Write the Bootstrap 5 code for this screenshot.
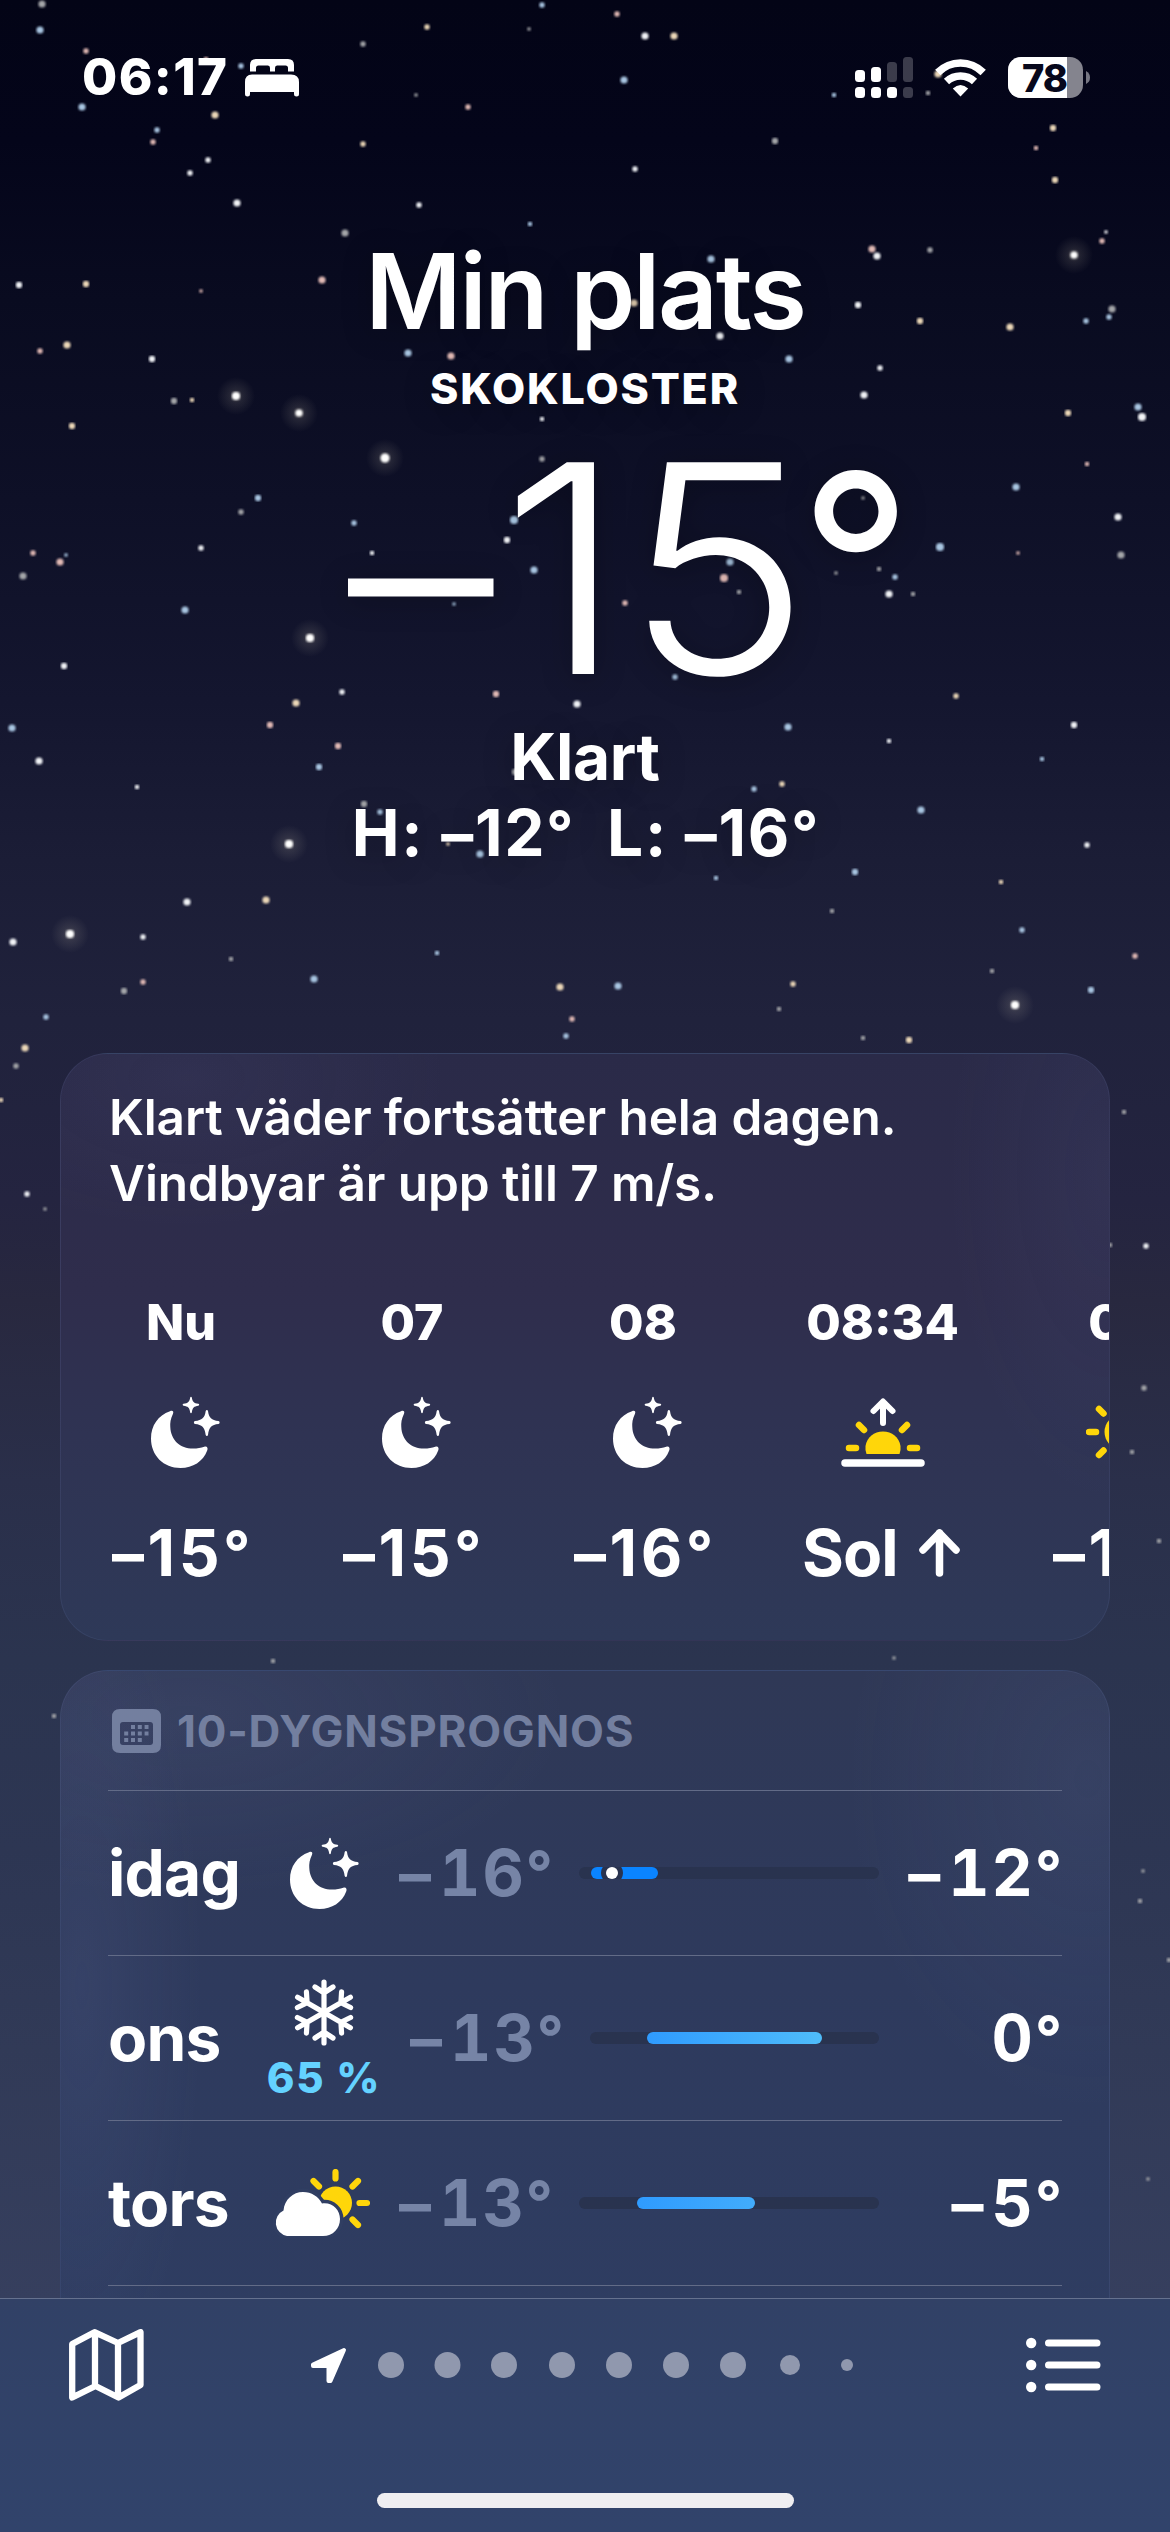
<!DOCTYPE html>
<html lang="sv" data-bs-theme="dark">
<head>
<meta charset="utf-8">
<meta name="viewport" content="width=device-width, initial-scale=1">
<title>Väder</title>
<link href="https://cdn.jsdelivr.net/npm/bootstrap@5.3.0/dist/css/bootstrap.min.css" rel="stylesheet">
<style>
  body { font-family: Inter, "Liberation Sans", sans-serif; color: #fff; background: #31426a; }
  .phone { width: 1170px; height: 2532px; background: linear-gradient(180deg, #030416 0, #04051a 140px, #090b20 300px, #0e1027 500px, #14162f 700px, #1b1d36 860px, #20223c 1020px, #242440 1200px, #28283f 1300px, #2a2f4a 1480px, #2b344f 1660px, #2d3653 1850px, #313a57 2050px, #363f5e 2298px); }
  .sky { left: 0; top: 0; }
  .screen { height: 2298px; }
  .statusbar { height: 155px; padding: 0 79px 0 82px; }
  .clock { font-size: 51px; font-weight: 760; letter-spacing: 1.4px; }
  .wifi { margin: 0 22px; }
  .hero { padding-top: 76px; text-shadow: 0 4px 30px rgba(0,0,0,.25); }
  .place { font-size: 104.5px; line-height: 120px; font-weight: 560; letter-spacing: -2.3px; }
  .town { font-size: 43px; line-height: 75px; font-weight: 850; letter-spacing: 1.8px; }
  .now-temp { font-size: 291px; line-height: 284px; font-weight: 335; padding-left: 348px; }
  .digits { transform: scaleX(1.08); margin-left: 18px; }
  .mn { position: relative; top: .015em; }
  .dg { font-size: .92em; line-height: 0; vertical-align: .05em; letter-spacing: 0; }
  .now-temp .mn { font-weight: 340; }
  .now-temp .dg { font-size: .86em; line-height: inherit; font-weight: 380; position: relative; top: -.02em; }
  .now-text { font-size: 64px; line-height: 93px; font-weight: 660; letter-spacing: -.4px; }
  .now-range { font-size: 64px; line-height: 59px; font-weight: 660; letter-spacing: 1.7px; white-space: pre; }
  .panels { margin: 191px 60px 0; gap: 29px; }
  .panel { border-radius: 48px; border: 1px solid rgba(140,160,220,.1); }
  .hourly { height: 588px; background: radial-gradient(260px 150px at 12% 4%, rgba(120,120,180,.08), transparent), radial-gradient(160px 330px at 100% 20%, rgba(110,125,190,.08), transparent), linear-gradient(180deg, #2a2a48 0, #2f2d4c 40%, #2f3353 65%, #2e3958 100%); padding: 30px 0 0 48px; }
  .summary { font-size: 49.5px; line-height: 66px; font-weight: 560; letter-spacing: -.1px; }
  .hours { margin: 76px 0 0 3px; gap: 93px; }
  .hour { width: 138px; }
  .hour-sun { width: 155px; }
  .hour-label { font-size: 50px; line-height: 60px; font-weight: 780; white-space: nowrap; }
  .hour-icon { height: 160px; }
  .hour .moon { margin-left: 7px; }
  .hour-temp { font-size: 64px; line-height: 81px; font-weight: 700; letter-spacing: 3.6px; white-space: nowrap; }
  .hour-sun .hour-temp { letter-spacing: -1px; margin-left: -3px; }
  .daily { height: 900px; padding: 0 47px; background: radial-gradient(380px 180px at 12% 5%, rgba(125,135,190,.1), transparent), radial-gradient(120px 420px at 2% 35%, rgba(125,135,190,.1), transparent), radial-gradient(240px 330px at 98% 12%, rgba(120,135,190,.1), transparent), linear-gradient(180deg, #2f3856 0, #2e3a5d 35%, #2f3f65 100%); }
  .daily-title { height: 119px; font-size: 44px; font-weight: 660; letter-spacing: .8px; color: #737f9f; }
  .calendar { margin: 0 16px 0 4px; }
  .day { height: 165px; border-top: 1px solid #626b87; font-size: 64px; font-weight: 700; }
  .day-name { width: 141px; letter-spacing: -.8px; }
  .day-icon { width: 150px; }
  .day-icon.wide { margin-right: 11px; padding-top: 11px; }
  .partly { margin-left: -6px; }
  .rain { font-size: 42px; line-height: 63px; font-weight: 820; letter-spacing: 1.7px; color: #64d2ff; white-space: nowrap; }
  .low, .high { font-variant-numeric: tabular-nums; letter-spacing: 2px; white-space: nowrap; }
  .low .mn, .high .mn { letter-spacing: 8px; }
  .low { width: 180px; color: #7684a6; }
  .high { width: 183px; }
  .track { height: 12px; border-radius: 6px; background: #29334f; }
  .span { height: 12px; border-radius: 6px; background: linear-gradient(90deg, #2f9bff, #4fbcfa); }
  .span.cold { background: #0a84ff; }
  .span.mid { background: linear-gradient(90deg, #2f9bff, #42acfb); }
  .dot-now { width: 12px; height: 12px; box-shadow: 0 0 0 5px #29334f; top: 0; clip-path: inset(0 -5px); }
  .toolbar { height: 234px; border-top: 1px solid #65718e; background: linear-gradient(180deg, #314166, #31436b); }
  .tools { height: 132px; padding: 0 69px; }
  .pager { width: 550px; }
  .home { width: 417px; height: 15px; background: #efeef1; margin-top: 62px; }
</style>
</head>
<body>
<svg class="d-none" xmlns="http://www.w3.org/2000/svg">
  <symbol id="moon" viewBox="0 0 70 73">
    <path fill="#fff" d="M20 15.2C22.5 14 24 15.5 23 17.8C20.5 23 20 27 20.3 31C20.8 44 30 52.6 43 52.6C47.5 52.6 51 52 54.3 50.8C57 50 58.3 52 57.2 54.5C53 65.500 43 72 30.500 72C13.500 72 1 59.500 1 42.500C1 29.500 8 19.500 20 15.200Z"/>
    <path fill="#fff" d="M55.700 39C54.700 31 52 28.800 45 28C43.500 27.700 43.500 25.300 45 25C52 24.200 54.700 22 55.700 15C56 13.600 57.800 13.600 58 15C59 22 61.500 24.200 68.500 25C70 25.300 70 27.700 68.500 28C61.500 28.800 59 31 58 39C57.800 40.300 56 40.300 55.700 39Z"/>
    <path fill="#fff" d="M40.200 16.500C39.500 11.500 38 10.500 33.500 9.800C32.400 9.500 32.400 8 33.500 7.800C38 7.200 39.500 6 40.200 1.500C40.500.5 41.500.5 41.800 1.500C42.500 6 44 7.200 48.300 7.800C49.500 8 49.500 9.500 48.300 9.800C44 10.500 42.500 11.500 41.800 16.500C41.500 17.400 40.500 17.400 40.200 16.500Z"/>
  </symbol>
</svg>
<div class="phone position-relative overflow-hidden">
  <svg class="sky position-absolute" id="sky" width="1170" height="2298"><defs><radialGradient id="halo"><stop offset="0" stop-color="#fff3d0" stop-opacity=".34"/><stop offset=".35" stop-color="#fff3d0" stop-opacity=".1"/><stop offset="1" stop-color="#fff3d0" stop-opacity="0"/></radialGradient><filter id="soft"><feGaussianBlur stdDeviation=".8"/></filter></defs></svg>
  <div class="screen position-relative overflow-hidden">
    <header class="statusbar d-flex align-items-center justify-content-between">
      <div class="d-flex align-items-center">
        <span class="clock">06:17</span>
        <svg class="ms-3" width="54" height="38" viewBox="0 0 54 38" fill="#fff"><path d="M5 12.500V6Q5 0 11 0H43Q49 0 49 6V12.500H43V9Q43 6.500 40.500 6.500H32Q30 6.500 30 9V12.500H25V9Q25 6.500 23 6.500H13.500Q11 6.500 11 9V12.500Z"/><path d="M0 35V23Q0 15.500 7 15.500H46Q54 15.500 54 23V35Q54 37.500 51.500 37.500T49 35V33H5V35Q5 37.500 2.500 37.500T0 35Z"/></svg>
      </div>
      <div class="d-flex align-items-center">
        <svg width="58" height="42" fill="#fff"><rect y="13" width="10" height="12" rx="3.500"/><rect x="16" y="10" width="10" height="15" rx="3.500"/><g opacity=".22"><rect x="32" y="5" width="10" height="20" rx="3.500"/><rect x="48" width="10" height="25" rx="3.500"/><rect x="48" y="30" width="10" height="11" rx="3.500"/></g><rect y="30" width="10" height="11" rx="3.500"/><rect x="16" y="30" width="10" height="11" rx="3.500"/><rect x="32" y="30" width="10" height="11" rx="3.500"/></svg>
        <svg class="wifi" width="51" height="38" viewBox="0 0 51 38"><path d="M2.800 13.500Q12.500 4 25.500 4T48.200 13.500M11.500 22.500Q17.500 17 25.500 17T39.500 22.500" fill="none" stroke="#fff" stroke-width="7.600"/><path d="M17.800 29.500Q25.500 22.500 33.200 29.500L25.500 37.500Z" fill="#fff"/></svg>
        <svg width="83" height="42"><clipPath id="bat"><rect width="75" height="41" rx="13"/></clipPath><g clip-path="url(#bat)"><rect width="75" height="41" fill="#84848e"/><rect width="59" height="41" fill="#fff"/></g><path d="M78 14q4 2 4 6.500t-4 6.500z" fill="#777783"/><text x="36.500" y="34.500" text-anchor="middle" font-size="38" font-weight="850" fill="#07081c" letter-spacing="-1">78</text></svg>
      </div>
    </header>
    <section class="hero text-center">
      <div class="place">Min plats</div>
      <div class="town">SKOKLOSTER</div>
      <div class="now-temp d-flex"><span class="mn">–</span><span class="digits">15</span><span class="dg">°</span></div>
      <div class="now-text">Klart</div>
      <div class="now-range">H: <span class="mn">–</span>12<span class="dg">°</span>  L: <span class="mn">–</span>16<span class="dg">°</span></div>
    </section>
    <main class="panels d-flex flex-column">
      <section class="panel hourly overflow-hidden">
        <div class="summary">Klart väder fortsätter hela dagen.<br>Vindbyar är upp till 7 m/s.</div>
        <div class="hours d-flex text-center">
          <div class="hour flex-shrink-0"><div class="hour-label">Nu</div><div class="hour-icon d-flex align-items-center justify-content-center"><svg class="moon" width="70" height="73"><use href="#moon"/></svg></div><div class="hour-temp"><span class="mn">–</span>15<span class="dg">°</span></div></div>
          <div class="hour flex-shrink-0"><div class="hour-label">07</div><div class="hour-icon d-flex align-items-center justify-content-center"><svg class="moon" width="70" height="73"><use href="#moon"/></svg></div><div class="hour-temp"><span class="mn">–</span>15<span class="dg">°</span></div></div>
          <div class="hour flex-shrink-0"><div class="hour-label">08</div><div class="hour-icon d-flex align-items-center justify-content-center"><svg class="moon" width="70" height="73"><use href="#moon"/></svg></div><div class="hour-temp"><span class="mn">–</span>16<span class="dg">°</span></div></div>
          <div class="hour-sun flex-shrink-0"><div class="hour-label">08:34</div><div class="hour-icon d-flex align-items-center justify-content-center">
            <svg width="84" height="72" fill="none" stroke-linecap="round"><path d="M42 27V6M32.500 15L42 5.500 51.500 15" stroke="#fff" stroke-width="6" stroke-linejoin="round"/><path d="M4 67H80" stroke="#fff" stroke-width="7.500"/><path d="M25.500 58Q24 53 24.500 50C26 41 33 35.500 42 35.500S58 41 59.500 50Q60 53 58.500 58Z" fill="#ffd60a"/><path d="M8 52H15M69 52H76M18 29L23 34M66 29L61 34" stroke="#ffd60a" stroke-width="6.500"/></svg></div>
            <div class="hour-temp d-flex align-items-center justify-content-between"><span>Sol</span><svg width="41" height="50" fill="none" stroke="#fff" stroke-width="7.500" stroke-linecap="round" stroke-linejoin="round"><path d="M20.500 45V5M4 22L20.500 5 37 22"/></svg></div></div>
          <div class="hour flex-shrink-0"><div class="hour-label">09</div><div class="hour-icon d-flex align-items-center justify-content-center"><svg width="72" height="72" viewBox="-36 -36 72 72"><circle r="17.500" fill="#ffd60a"/><path d="M-33-0H-26M33 0H26M0-33V-26M0 33V26M-23-23L-18.500-18.500M23-23L18.500-18.500M-23 23L-18.500 18.500M23 23L18.500 18.500" stroke="#ffd60a" stroke-width="6.500" stroke-linecap="round"/></svg></div><div class="hour-temp"><span class="mn">–</span>15<span class="dg">°</span></div></div>
        </div>
      </section>
      <section class="panel daily">
        <div class="daily-title d-flex align-items-center">
          <svg class="calendar" width="49" height="44"><path fill="#737f9f" fill-rule="evenodd" d="M8 0H41Q49 0 49 8V36Q49 44 41 44H8Q0 44 0 36V8Q0 0 8 0ZM11 13Q8 13 8 16V33Q8 36 11 36H38Q41 36 41 33V16Q41 13 38 13Z"/><path stroke="#737f9f" stroke-width="4" stroke-dasharray="4 2.800" d="M19 18H36.500M12.200 24.500H36.500M12.200 31H30"/></svg>
          <span>10-DYGNSPROGNOS</span>
        </div>
        <div class="day d-flex align-items-center">
          <div class="day-name">idag</div>
          <div class="day-icon d-flex justify-content-center"><svg width="70" height="73"><use href="#moon"/></svg></div>
          <div class="low"><span class="mn">–</span>16<span class="dg">°</span></div>
          <div class="track flex-grow-1"><div class="span cold position-relative" style="width:22.300%;margin-left:4%"><div class="dot-now position-absolute bg-white rounded-circle" style="left:22.400%"></div></div></div>
          <div class="high text-end"><span class="mn">–</span>12<span class="dg">°</span></div>
        </div>
        <div class="day d-flex align-items-center">
          <div class="day-name">ons</div>
          <div class="day-icon wide d-flex flex-column align-items-center"><svg width="60" height="67" viewBox="-30 -33.500 60 67" fill="none" stroke="#fff" stroke-width="5.200" stroke-linecap="round"><g id="arm2"><path id="arm" d="M0 0V-30.500M-9-25.500L0-19.500 9-25.500"/><use href="#arm" transform="rotate(60)"/><use href="#arm" transform="rotate(120)"/></g><use href="#arm2" transform="rotate(180)"/></svg><span class="rain">65 %</span></div>
          <div class="low"><span class="mn">–</span>13<span class="dg">°</span></div>
          <div class="track flex-grow-1"><div class="span" style="width:60.500%;margin-left:19.700%"></div></div>
          <div class="high text-end">0<span class="dg">°</span></div>
        </div>
        <div class="day d-flex align-items-center">
          <div class="day-name">tors</div>
          <div class="day-icon d-flex justify-content-center"><svg class="partly" width="97" height="68" fill="none" stroke-linecap="round"><circle cx="62.500" cy="34" r="16.500" fill="#ffd60a"/><path d="M62.500 3V9.500M86.500 34H94M40.500 12L46 17.500M85 12L79.500 17.500M85 56L79.500 50.500" stroke="#ffd60a" stroke-width="6.200"/><path d="M14 67A13.500 13.500 0 0 1 10.500 41.500C11.500 30.500 20 23 30 23C38.500 23 45.500 27.500 49 34.500C59.500 33 67 41 67 50C67 59.500 60 67 50 67Z" fill="#fff" stroke="#303e62" stroke-width="7"/><path d="M14 67A13.500 13.500 0 0 1 10.500 41.500C11.500 30.500 20 23 30 23C38.500 23 45.500 27.500 49 34.500C59.500 33 67 41 67 50C67 59.500 60 67 50 67Z" fill="#fff"/></svg></div>
          <div class="low"><span class="mn">–</span>13<span class="dg">°</span></div>
          <div class="track flex-grow-1"><div class="span mid" style="width:39.500%;margin-left:19.300%"></div></div>
          <div class="high text-end"><span class="mn">–</span>5<span class="dg">°</span></div>
        </div>
        <div class="day"></div>
      </section>
    </main>
  </div>
  <footer class="toolbar position-relative">
    <div class="tools d-flex align-items-center justify-content-between">
      <svg width="75" height="72" fill="none" stroke="#fff" stroke-width="6.300" stroke-linejoin="round"><path d="M3.200 15L25.500 3.200 49 14 71.500 3.200V56L49.500 68.500 26.500 57 3.200 68.500ZM26 4V57M49 14V67"/></svg>
      <svg class="pager" height="36" viewBox="310 -18 550 36" fill="#9098ae"><path fill="#fff" stroke="#fff" stroke-width="4" stroke-linejoin="round" d="M344-15L313-.500V1H328.500V16H330.500Z"/><circle cx="391" r="13"/><circle cx="447.500" r="13"/><circle cx="504" r="13"/><circle cx="562" r="13"/><circle cx="619" r="13"/><circle cx="676" r="13"/><circle cx="733" r="13"/><circle cx="790" r="10"/><circle cx="847" r="6"/></svg>
      <svg width="75" height="56" fill="#fff"><circle cx="5.200" cy="6" r="5.200"/><circle cx="5.200" cy="28" r="5.200"/><circle cx="5.200" cy="50" r="5.200"/><path stroke="#fff" stroke-width="7" stroke-linecap="round" d="M22.500 6H71M22.500 28H71M22.500 50H71"/></svg>
    </div>
    <div class="home mx-auto rounded-pill"></div>
  </footer>
</div>
<script src="https://cdn.jsdelivr.net/npm/bootstrap@5.3.0/dist/js/bootstrap.bundle.min.js"></script>
<script>
// Each star: x, y, radius, colour key (w white, b blue, r rose, y warm, g dim, h bright with a halo)
const stars = `42,4,4,g 40,30,4,b 86,51,3,r 363,44,3,g 427,27,3,y 542,5,3,b 529,29,2,g 617,14,3,r 645,36,4,w 674,36,4,y 624,80,4,b 416,95,2,g 468,107,3,r 82,107,4,b 215,115,4,y 157,130,3,b 153,142,3,r 208,160,3,w 190,173,3,w 237,203,4,w 363,144,3,y 419,205,3,w 345,233,4,g 530,224,2.500,b 635,169,3,w 775,141,3.500,g 1053,128,3.500,y 1036,148,2.500,r 1055,180,3.500,y 1106,232,2,w 1102,241,3,r 1074,255,4,h 930,250,3,g 872,249,4,r 877,256,4,w 711,259,4,b 19,285,3.500,w 86,284,3.500,y 201,291,2,r 322,280,4,r 858,305,3.500,w 920,321,3.500,y 1010,327,4,y 1112,309,4,g 1109,317,3,b 1086,321,3,b 720,336,4,w 67,345,4,y 40,351,3,r 152,359,3.500,w 408,353,4,b 451,356,4,r 789,359,4,b 880,368,3,w 864,395,4,w 1068,413,3.500,y 1138,407,4,b 1142,417,4.500,w 174,401,3.500,g 192,400,2.500,y 236,396,4.500,h 299,413,4,h 542,419,2.500,w 834,95,2.500,b 928,93,2.500,g 938,74,4,y 241,66,3,b 206,59,2.500,r 634,303,4,y
72,426,3.500,y 385,458,5,h 542,459,3,g 258,498,3.500,b 241,512,3,g 354,523,3,b 514,520,4.500,b 507,540,3.500,w 201,548,3,w 372,553,2.500,w 534,570,4,b 730,562,4,b 724,578,4.500,r 739,592,2.500,g 625,603,3,r 454,604,2,b 33,553,3,r 66,555,2,b 60,562,4,r 23,576,4,g 185,610,4,b 310,638,4.500,h 64,666,3.500,w 342,692,3,w 296,703,4,y 496,694,3.500,r 577,704,4,w 675,677,3,b 270,725,3.500,r 338,746,3.500,r 319,767,3.500,b 12,728,4,b 39,761,4,w 137,787,2.500,w 364,804,3.500,g 380,812,3,b 289,844,4.500,h 448,844,2,y 480,854,4,b 515,772,3.500,g 788,727,4,b 889,741,2.500,w 956,696,3,y 1074,725,3.500,w 1042,759,2.500,b 754,789,3,b 782,784,3,y 921,810,4,b 1087,845,3,w 855,872,3.500,b 716,878,2.500,b 1001,882,2.500,y 266,900,4,y 187,902,4,w 1016,487,4,b 1087,464,2.500,r 1118,517,4,w 1121,555,4,g 940,547,4.500,b 1018,553,2,r 863,498,2,g 879,569,2.500,g 895,577,3,b 836,573,2,g 889,594,4,w 913,594,2.500,g
70,934,4.500,h 13,942,4,w 143,937,3,w 231,959,2.500,g 314,979,4,b 143,982,3,r 124,991,3.500,g 46,1017,3,b 25,1048,4,y 16,1066,3,g 437,953,2.500,b 560,987,4,y 618,986,4,b 572,1019,3,r 566,1036,3,b 832,911,2.500,g 1022,930,3,b 1135,956,3,r 992,971,2.500,g 1091,990,3.500,b 1015,1005,4.500,h 793,984,3,y 779,1009,2.500,g 863,1038,2.500,g 909,1040,3.500,y 1124,1112,2.500,g 27,1194,3,w 45,1209,2,g 1146,1246,3,w 1110,1245,2.500,g 1,1100,2.500,y 1144,1388,3,g 1132,1452,2.500,g 1159,1541,2.500,g 894,1658,2,g 273,1661,2.500,g 54,1716,2.500,g 1143,1871,2,g 1140,1901,2.500,g 1169,1960,2.500,g 1148,2179,2,g`;
const tint = { w: '#f1f3f6', b: '#a9c6e2', r: '#e2bab5', y: '#ecd8b8', g: '#a4a6a9', h: '#ffffff' };
const circle = (x, y, r, extra) => `<circle cx="${x}" cy="${y}" r="${r}" ${extra}/>`;
document.getElementById('sky').innerHTML += stars.split(/\s+/).map(s => {
  const [x, y, r, c] = s.split(',');
  return (c === 'h' ? circle(x, y, 19, 'fill="url(#halo)"') : '') + circle(x, y, r * 0.9, `fill="${tint[c]}" filter="url(#soft)"`);
}).join('');
</script>
</body>
</html>
